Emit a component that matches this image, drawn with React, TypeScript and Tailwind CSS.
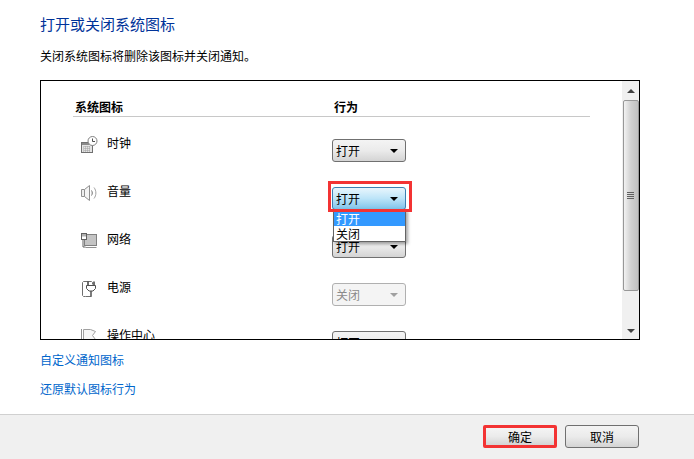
const Caret = ({ className = "border-t-black" }: { className?: string }) => (
  <span className={`h-0 w-0 border-x-[4px] border-t-[4px] border-x-transparent ${className}`} />
);

function ClockIcon() {
  return (
    <svg width="18" height="18" viewBox="0 0 18 18" fill="none">
      <rect x="1.5" y="6.5" width="11" height="10" fill="#e4e4e4" stroke="#707070" />
      <rect x="2" y="7" width="10" height="2" fill="#8a8a8a" />
      <path d="M3 11h8M3 13h8M3 15h8M5 10v6M7 10v6M9 10v6" stroke="#a0a0a0" strokeDasharray="1 1" />
      <circle cx="12.5" cy="5" r="4.5" fill="#fff" stroke="#808080" />
      <path d="M12.5 2.5V5.5H15" stroke="#505050" />
    </svg>
  );
}

function SpeakerIcon() {
  return (
    <svg width="18" height="18" viewBox="0 0 18 18" fill="none">
      <path d="M1.5 5.5h3v7h-3z" fill="#eee" stroke="#909090" />
      <path d="M4.500 5.500 9.500 1.500v15l-5-4z" fill="#f4f4f4" stroke="#909090" />
      <path d="M11.500 6.500c1 1.500 1 3.500 0 5" stroke="#707070" />
      <path d="M14 3.500c2.500 3.200 2.500 7.800 0 11" stroke="#a0a0a0" />
    </svg>
  );
}

function NetworkIcon() {
  return (
    <svg width="18" height="18" viewBox="0 0 18 18" fill="none">
      <rect x="4.500" y="2.500" width="12" height="11" fill="#c4c4c4" stroke="#808080" />
      <path d="M5.500 15.500h11" stroke="#909090" />
      <rect x="1.500" y="1.500" width="5" height="6" fill="#fff" stroke="#606060" />
      <path d="M3 1.500v3M5 1.500v3M3 7.500v7.500h2.500" stroke="#606060" />
    </svg>
  );
}

function PowerIcon() {
  return (
    <svg width="18" height="18" viewBox="0 0 18 18" fill="none">
      <path d="M2.500 2.500l1-1h8l1 1v2M5.500 16.500h-2l-1-1v-13M5.500 16.500h6" stroke="#707070" />
      <path d="M8 1.500v4M14 1.500v4" stroke="#404040" strokeWidth="1.500" />
      <path d="M6.500 5.500h9v3l-2.500 2.500h-4l-2.500-2.500z" fill="#fff" stroke="#505050" />
      <path d="M11 11v5.500" stroke="#505050" strokeWidth="1.500" />
    </svg>
  );
}

function FlagIcon() {
  return (
    <svg width="18" height="18" viewBox="0 0 18 18" fill="none">
      <path d="M1.500 1v16" stroke="#909090" />
      <path d="M3.500 1.500h7l5 2-3 4 3 4h-12z" fill="#f6f6f6" stroke="#a0a0a0" />
    </svg>
  );
}

function Select({
  value,
  disabled = false,
  focused = false,
}: {
  value: string;
  disabled?: boolean;
  focused?: boolean;
}) {
  let tone = "border-[#707070] bg-gradient-to-b from-[#f4f4f4] via-[#ebebeb] to-[#d4d4d4] text-black";
  if (disabled) tone = "border-[#b0b0b0] bg-[#f4f4f4] text-[#8a8a8a]";
  if (focused) tone = "border-[#3c7fb1] bg-gradient-to-b from-[#e8f6fd] via-[#bce4f8] to-[#7fc4ea] text-black";

  return (
    <div
      className={`flex h-[23px] w-[74px] items-center justify-between rounded-[3px] border pl-[3px] pr-[7px] text-[12px] ${tone}`}
    >
      {value}
      <Caret className={disabled ? "border-t-[#a0a0a0]" : "border-t-black"} />
    </div>
  );
}

const ROWS = [
  { icon: <ClockIcon />, name: "时钟", value: "打开" },
  { icon: <SpeakerIcon />, name: "音量", value: "打开", focused: true },
  { icon: <NetworkIcon />, name: "网络", value: "打开" },
  { icon: <PowerIcon />, name: "电源", value: "关闭", disabled: true },
  { icon: <FlagIcon />, name: "操作中心", value: "打开" },
];

function Scrollbar() {
  return (
    <div className="flex h-full w-[17px] shrink-0 flex-col items-center bg-[#f0f0f0]">
      <div className="flex h-[19px] items-center justify-center">
        <span className="h-0 w-0 border-x-[4px] border-b-[4px] border-x-transparent border-b-[#404040]" />
      </div>
      <div className="flex h-[191px] w-[16px] flex-col items-center justify-center gap-px rounded-[2px] border border-[#979797] bg-gradient-to-r from-[#f2f2f2] via-[#d0d0d0] to-[#c0c0c0]">
        <span className="h-px w-[7px] bg-[#606060]" />
        <span className="h-px w-[7px] bg-[#606060]" />
        <span className="h-px w-[7px] bg-[#606060]" />
        <span className="h-px w-[7px] bg-[#606060]" />
      </div>
      <div className="flex-1" />
      <div className="flex h-[17px] items-center justify-center">
        <Caret className="border-t-[#404040]" />
      </div>
    </div>
  );
}

export default function App() {
  return (
    <div className="flex h-[459px] w-[694px] flex-col overflow-hidden bg-white font-['Noto_Sans_CJK_SC',sans-serif] text-[12px] text-black">
      <div className="flex-1 px-10 pt-[13px]">
        <h1 className="text-[15px] leading-[22px] text-[#003399]">打开或关闭系统图标</h1>
        <p className="mt-[12px] text-[12px] leading-[18px]">关闭系统图标将删除该图标并关闭通知。</p>

        <div className="relative mt-[15px] flex h-[260px] w-[600px] border border-black">
          <div className="flex-1 overflow-hidden pl-8 pr-[32px] pt-[17px]">
            <div className="flex h-[19px] border-b border-[#c8c8c8] pl-[2px] font-bold leading-[18px]">
              <span className="w-[259px]">系统图标</span>
              <span>行为</span>
            </div>
            <div className="mt-[17px]">
              {ROWS.map((row) => (
                <div key={row.name} className="flex h-[48px] items-start">
                  <div className="ml-[7px] mt-[2px] w-[27px]">{row.icon}</div>
                  <span className="w-[225px] leading-[18px]">{row.name}</span>
                  <div className="mt-[5px]">
                    <Select value={row.value} disabled={row.disabled} focused={row.focused} />
                  </div>
                </div>
              ))}
            </div>
          </div>
          <Scrollbar />

          {/* open dropdown and the red marker sit on top of the rows */}
          <div className="absolute left-[292px] top-[128px] w-[73px] border border-t-0 border-[#646464] bg-white pt-[2px] shadow-[2px_2px_3px_rgba(0,0,0,0.35)]">
            <div className="h-[15px] bg-[#3399ff] pl-[2px] leading-[15px] text-white">打开</div>
            <div className="h-[15px] pl-[2px] leading-[15px]">关闭</div>
          </div>
          <div className="absolute left-[287px] top-[100px] h-[31px] w-[84px] border-[3px] border-[#f33333]" />
        </div>

        <div className="mt-[11px] flex flex-col gap-[11px] leading-[18px] text-[#0066cc]">
          <a>自定义通知图标</a>
          <a>还原默认图标行为</a>
        </div>
      </div>

      <div className="flex h-[45px] items-start justify-end gap-2 border-t border-[#d0d0d0] bg-[#f0f0f0] pr-[55px] pt-[10px]">
        <button className="h-[23px] w-[74px] rounded-[2px] border-[3px] border-[#f33333] bg-gradient-to-b from-[#f4f4f4] via-[#ebebeb] to-[#d4d4d4] text-[12px] leading-[17px]">
          确定
        </button>
        <button className="h-[23px] w-[74px] rounded-[3px] border border-[#707070] bg-gradient-to-b from-[#f4f4f4] via-[#ebebeb] to-[#d4d4d4] text-[12px] leading-[21px]">
          取消
        </button>
      </div>
    </div>
  );
}
